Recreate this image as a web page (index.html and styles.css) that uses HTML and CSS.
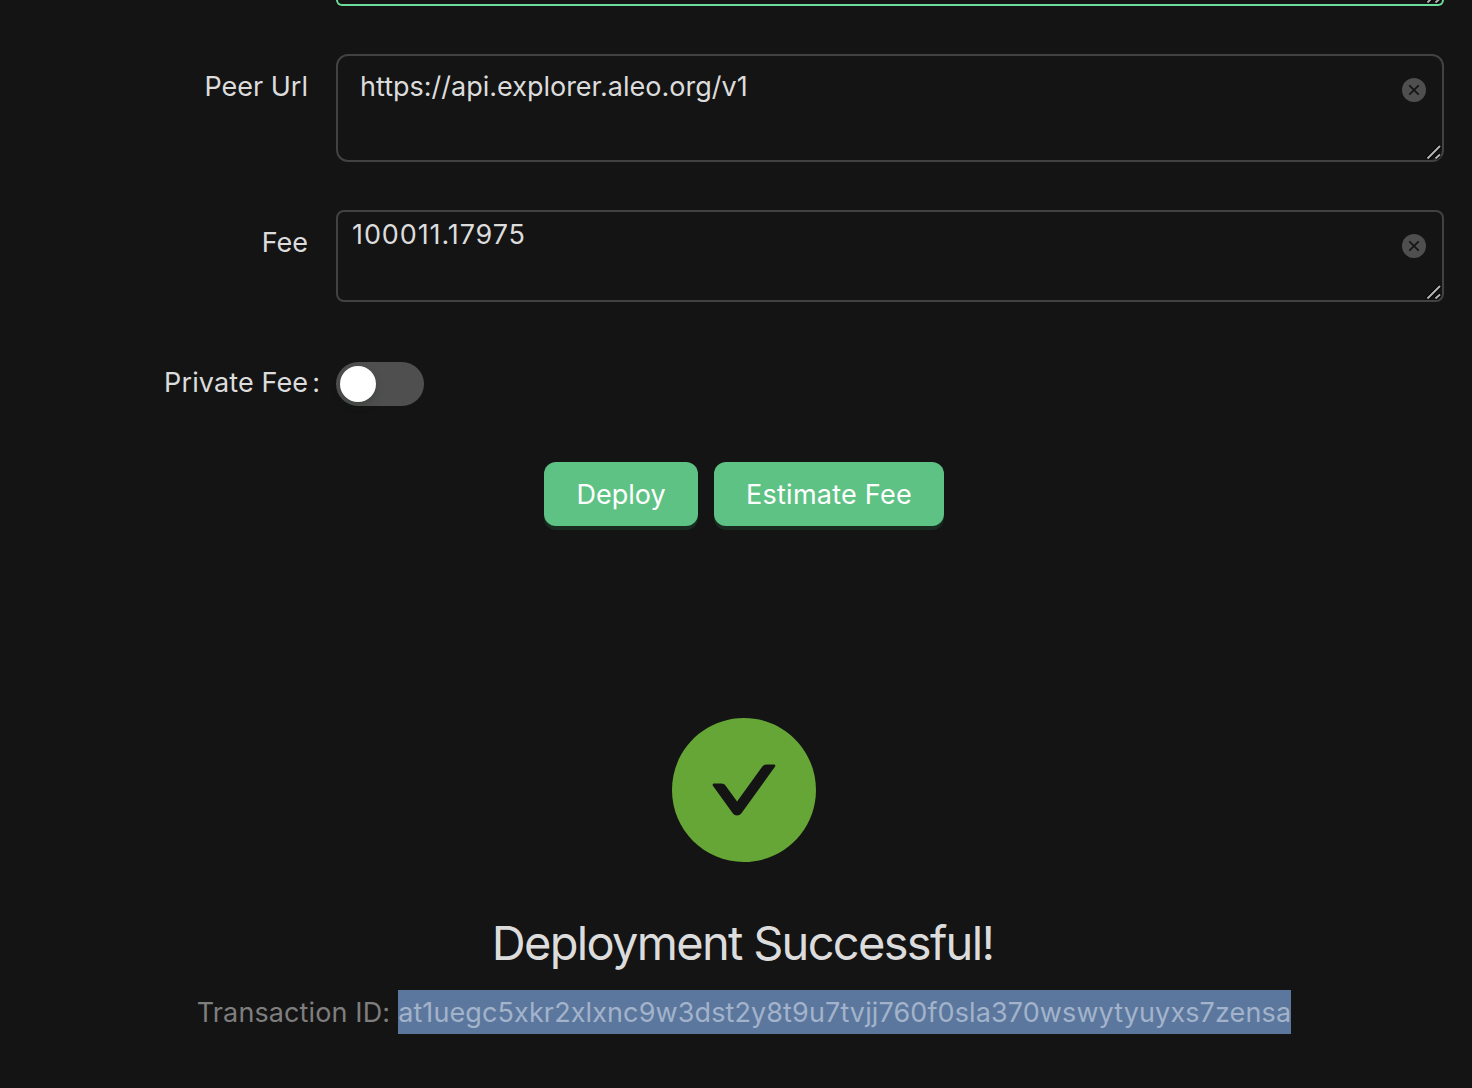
FILE: index.html
```
<!DOCTYPE html>
<html lang="en">
<head>
<meta charset="utf-8">
<title>Deploy Program</title>
<link rel="stylesheet" href="styles.css">
</head>
<body>
<svg class="defs" width="0" height="0" aria-hidden="true">
  <symbol id="clear" viewBox="0 0 24 24">
    <circle cx="12" cy="12" r="12" fill="#4f4f4f"/>
    <path d="M7.3 7.3 16.7 16.7M16.7 7.3 7.3 16.7" stroke="#141414" stroke-width="1.7" fill="none"/>
  </symbol>
  <symbol id="grip" viewBox="0 0 16 16">
    <path d="M1.5 14.5 14 2M9.5 14.5 14 10.5" stroke="#000" stroke-width="4" fill="none"/>
    <path d="M1.5 14.5 14 2M9.5 14.5 14 10.5" stroke="#b4b4b4" stroke-width="2" fill="none"/>
  </symbol>
</svg>
<main class="page">
  <form class="form">
    <div class="row row-program">
      <div></div>
      <div class="box box-active"><svg class="grip"><use href="#grip"/></svg></div>
    </div>
    <div class="row row-peer">
      <div class="label">Peer Url</div>
      <div class="box box-peer"><span>https://api.explorer.aleo.org/v1</span><svg class="clear"><use href="#clear"/></svg><svg class="grip"><use href="#grip"/></svg></div>
    </div>
    <div class="row row-fee">
      <div class="label">Fee</div>
      <div class="box box-fee"><span class="amount">100011.17975</span><svg class="clear"><use href="#clear"/></svg><svg class="grip"><use href="#grip"/></svg></div>
    </div>
    <div class="row row-private">
      <div class="label label-colon"><span class="private">Private Fee</span><span class="colon">:</span></div>
      <div class="switch"><span class="knob"></span></div>
    </div>
    <div class="actions">
      <button type="button" class="btn btn-deploy">Deploy</button>
      <button type="button" class="btn btn-estimate">Estimate Fee</button>
    </div>
  </form>
  <section class="result">
    <svg class="check" viewBox="64 64 896 896"><path fill="#65a637" d="M512 64C264.6 64 64 264.6 64 512s200.6 448 448 448 448-200.6 448-448S759.4 64 512 64zm193.5 301.7l-210.6 292a31.8 31.8 0 01-51.7 0L318.5 484.9c-3.8-5.3 0-12.7 6.5-12.7h46.9c10.2 0 19.9 4.9 25.9 13.3l71.2 98.8 157.2-218c6-8.3 15.6-13.3 25.9-13.3H699c6.5 0 10.3 7.4 6.5 12.7z"/></svg>
    <h1 class="title">Deployment Successful!</h1>
    <p class="subtitle"><span>Transaction ID:</span><span class="selected">at1uegc5xkr2xlxnc9w3dst2y8t9u7tvjj760f0sla370wswytyuyxs7zensa</span></p>
  </section>
</main>
</body>
</html>
```
FILE: styles.css
```
* { box-sizing: border-box; }
body {
  margin: 0;
  background: #141414;
  color: #dcdcdc;
  font: 400 27px/44px Inter, "Liberation Sans", sans-serif;
}
.defs { display: block; }
.page { width: 1472px; height: 1088px; overflow: hidden; white-space: nowrap; }
.form { display: flex; flex-direction: column; }
.row { display: grid; grid-template-columns: 336px 1108px; align-items: start; }
.label { padding: 11px 28px 0 0; text-align: right; }
.box { position: relative; border: 2px solid #424242; border-radius: 12px; }
.box-active { height: 6px; border-color: #6bdc9b; border-top: 0; border-radius: 0 0 8px 8px; }
.row-peer { margin-top: 48px; }
.box-peer { height: 108px; padding: 9px 22px; }
.row-fee { margin-top: 48px; }
.box-fee { height: 92px; padding: 1px 14px; border-radius: 8px; }
.amount { letter-spacing: 0.9px; }
.clear { position: absolute; top: 22px; right: 16px; width: 24px; height: 24px; }
.grip { position: absolute; right: 0; bottom: 0; width: 16px; height: 16px; }
.row-private { margin-top: 60px; }
.label-colon { padding: 0 16px 0 0; margin-top: -1px; }
.private { letter-spacing: 0.12px; }
.colon { margin-left: 4px; }
.switch { width: 88px; height: 44px; padding: 4px; border-radius: 22px; background: #4f4f4f; }
.knob { display: block; width: 36px; height: 36px; border-radius: 50%; background: #fff; box-shadow: 0 4px 8px rgba(0, 35, 11, 0.2); }
.actions { display: flex; gap: 16px; margin: 56px 0 0 544px; }
.btn { height: 64px; padding: 2px 0 0; border: 0; border-radius: 12px; background: #5fc285; color: #fff; font: inherit; box-shadow: 0 4px 0 #192a21; }
.btn-deploy { width: 154px; }
.btn-estimate { width: 230px; letter-spacing: 0.25px; }
.result { display: flex; flex-direction: column; align-items: center; width: 1488px; padding-top: 192px; }
.check { width: 144px; height: 144px; }
.title { margin: 49px 0 0; padding-right: 3px; font-size: 47px; line-height: 64px; font-weight: 400; letter-spacing: -1.7px; }
.subtitle { display: flex; gap: 8px; margin: 15px 0 0; color: #7e7e7e; line-height: 42px; letter-spacing: 0.11px; }
.subtitle span { padding-top: 2px; }
.selected { background: #5c779d; color: #a2b3cb; }
```
